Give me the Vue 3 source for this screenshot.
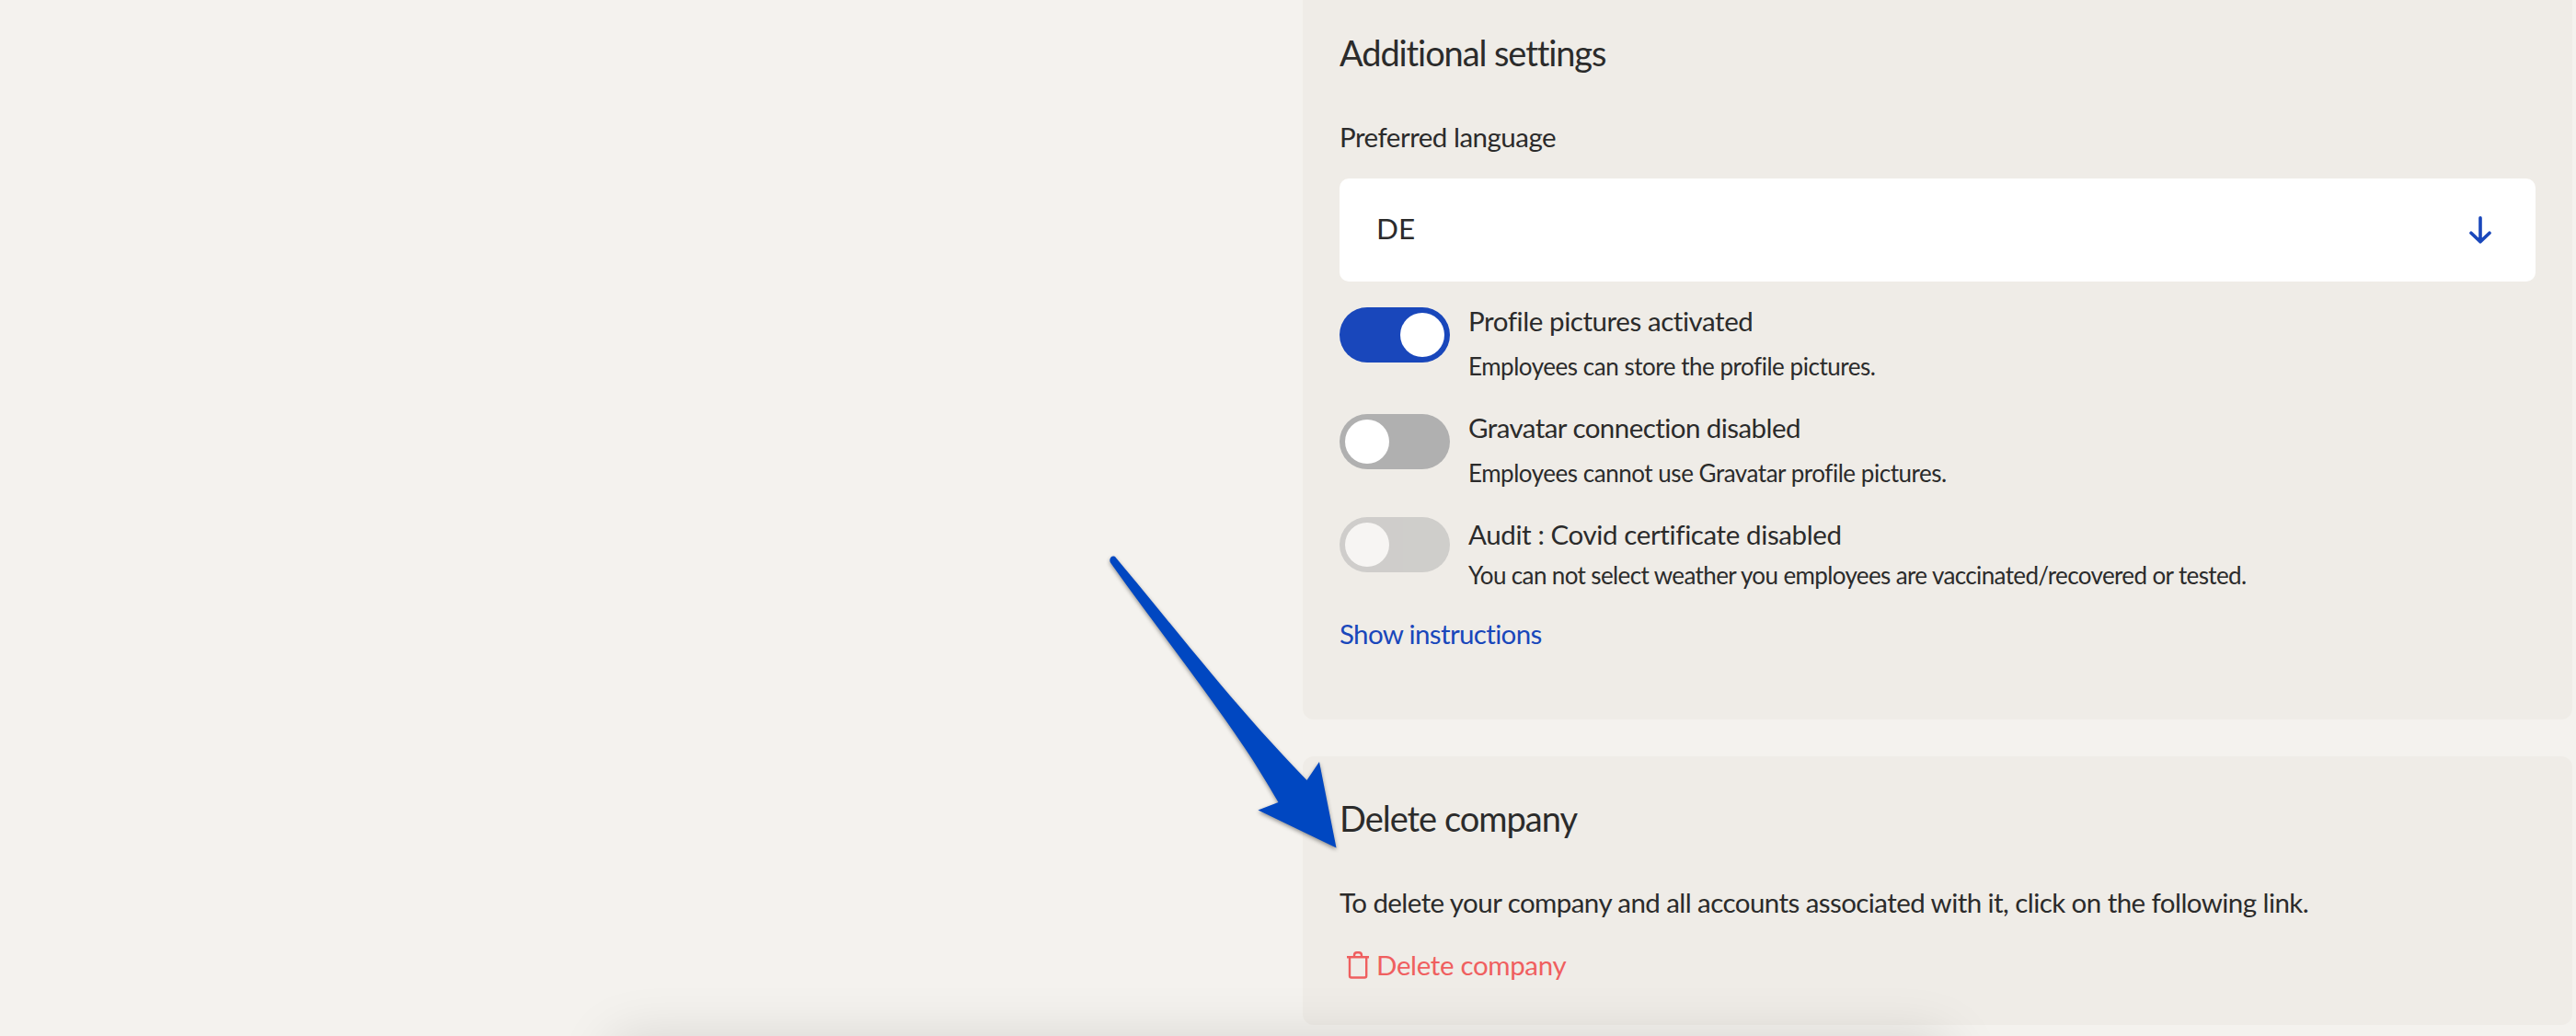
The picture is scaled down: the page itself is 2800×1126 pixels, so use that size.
<script setup>
import { ref } from "vue";

const language = ref("DE");

const settings = ref([
  {
    key: "profile",
    title: "Profile pictures activated",
    text: "Employees can store the profile pictures.",
    active: true,
    locked: false,
  },
  {
    key: "gravatar",
    title: "Gravatar connection disabled",
    text: "Employees cannot use Gravatar profile pictures.",
    active: false,
    locked: false,
  },
  {
    key: "audit",
    title: "Audit : Covid certificate disabled",
    text: "You can not select weather you employees are vaccinated/recovered or tested.",
    active: false,
    locked: true,
  },
]);

const toggle = (setting) => {
  if (!setting.locked) {
    setting.active = !setting.active;
  }
};
</script>

<template>
  <div class="page">
    <div class="column">
      <section class="panel settings">
        <h2 class="heading">Additional settings</h2>
        <div class="label">Preferred language</div>
        <div class="select">
          <span class="value">{{ language }}</span>
          <svg class="arrow-down" width="24" height="30" viewBox="0 0 24 30">
            <path d="M12 1.8V27.5M2 18.2L12 27.8L22 18.2" />
          </svg>
        </div>

        <div class="switches">
          <div
            v-for="setting in settings"
            :key="setting.key"
            class="switch-row"
            :class="[setting.key, { locked: setting.locked }]"
          >
            <div class="switch" :class="{ active: setting.active }" @click="toggle(setting)">
              <div class="knob"></div>
            </div>
            <div class="description">
              <div class="title">{{ setting.title }}</div>
              <div class="text">{{ setting.text }}</div>
            </div>
          </div>
        </div>

        <a class="instructions">Show instructions</a>
      </section>

      <section class="panel delete">
        <h2 class="heading">Delete company</h2>
        <p class="info">
          To delete your company and all accounts associated with it, click on the following link.
        </p>
        <a class="delete-link">
          <svg class="trash" width="24" height="30" viewBox="0 0 24 30">
            <path d="M0 6.3H24M3 6.3V26.5Q3 28.5 5 28.5H19.2Q21.2 28.5 21.2 26.5V6.3M8 6V4.5Q8 1.3 11 1.3H13Q16 1.3 16 4.5V6" />
          </svg>
          <span>Delete company</span>
        </a>
      </section>
    </div>

    <!-- pointer to the delete section -->
    <svg class="pointer" width="300" height="360" viewBox="0 0 300 360">
      <path
        d="M33 26.2C80 82 145 165 202 227Q222 249 240.5 268L254 248L272.5 341.5L187.5 300.5L209.5 292C196 269 184 249 173 233C130 169 75 99 27 31.5C24.5 27 29.5 22 33 26.2Z"
      />
    </svg>
    <div class="bottom-bar"></div>
  </div>
</template>

<style>
body {
  margin: 0;
  background: #f4f2ee;
}
</style>

<style scoped>
.page {
  position: relative;
  display: flex;
  justify-content: flex-end;
  box-sizing: border-box;
  width: 2800px;
  height: 1126px;
  padding-right: 4px;
  overflow: hidden;
  background: #f4f2ee;
  color: #2b2b2b;
  font-family: "Lato", sans-serif;
  font-size: 29.5px;
  line-height: 40px;
  white-space: nowrap;
}

.column {
  display: flex;
  flex-direction: column;
  gap: 40px;
  width: 1380px;
}

.panel {
  box-sizing: border-box;
  flex-shrink: 0;
  background: #efece7;
}

.settings {
  height: 782px;
  padding: 33px 40px 0;
  border-radius: 0 0 12px 12px;
}

.delete {
  height: 292px;
  padding: 43px 40px 0;
  border-radius: 12px;
}

.heading {
  margin: 0 0 48px;
  font-size: 38px;
  font-weight: 400;
  line-height: 48px;
  letter-spacing: -1.1px;
}

.delete .heading {
  letter-spacing: -1px;
}

.label {
  letter-spacing: -0.5px;
}

.select {
  display: flex;
  align-items: center;
  justify-content: space-between;
  box-sizing: border-box;
  height: 112px;
  margin-top: 25px;
  padding: 0 48px 0 40px;
  border-radius: 10px;
  background: #fff;
}

.value {
  padding-bottom: 4px;
  font-size: 31.5px;
}

.arrow-down {
  fill: none;
  stroke: #1947bb;
  stroke-width: 3.6;
  stroke-linecap: round;
  stroke-linejoin: round;
}

.switches {
  display: flex;
  flex-direction: column;
  gap: 29px;
  margin-top: 23px;
}

.switch-row {
  display: flex;
  gap: 20px;
}

.switch {
  display: flex;
  box-sizing: border-box;
  width: 120px;
  height: 60px;
  margin-top: 5px;
  padding: 6px;
  border-radius: 30px;
  background: #b0b0b0;
}

.switch.active {
  justify-content: flex-end;
  background: #1947bb;
}

.knob {
  width: 48px;
  height: 48px;
  border-radius: 50%;
  background: #fff;
}

.locked .switch {
  margin-top: 1px;
  opacity: 0.5;
}

.title {
  letter-spacing: -0.43px;
}

.text {
  margin-top: 11px;
  font-size: 26px;
  line-height: 36px;
  letter-spacing: -0.47px;
}

.gravatar .title {
  letter-spacing: -0.56px;
}

.audit .title {
  letter-spacing: -0.39px;
}

.audit .text {
  margin-top: 6px;
  letter-spacing: -0.62px;
}

.instructions {
  display: block;
  margin-top: 26px;
  color: #1947bb;
  letter-spacing: -0.65px;
}

.info {
  margin: 0;
  letter-spacing: -0.565px;
}

.delete-link {
  display: flex;
  align-items: center;
  gap: 8px;
  margin-top: 28px;
  padding-left: 8px;
  color: #ef5f5f;
  letter-spacing: -0.35px;
}

.trash {
  fill: none;
  stroke: #ef5f5f;
  stroke-width: 2.4;
}

.pointer {
  position: absolute;
  left: 1180px;
  top: 580px;
  fill: #0047c1;
  filter: drop-shadow(0 2px 2px rgba(0, 0, 0, 0.4));
}

.bottom-bar {
  position: absolute;
  left: 664px;
  top: 1128px;
  width: 1456px;
  height: 80px;
  border-radius: 20px;
  box-shadow: 0 0 60px rgba(0, 0, 0, 0.13);
}
</style>
